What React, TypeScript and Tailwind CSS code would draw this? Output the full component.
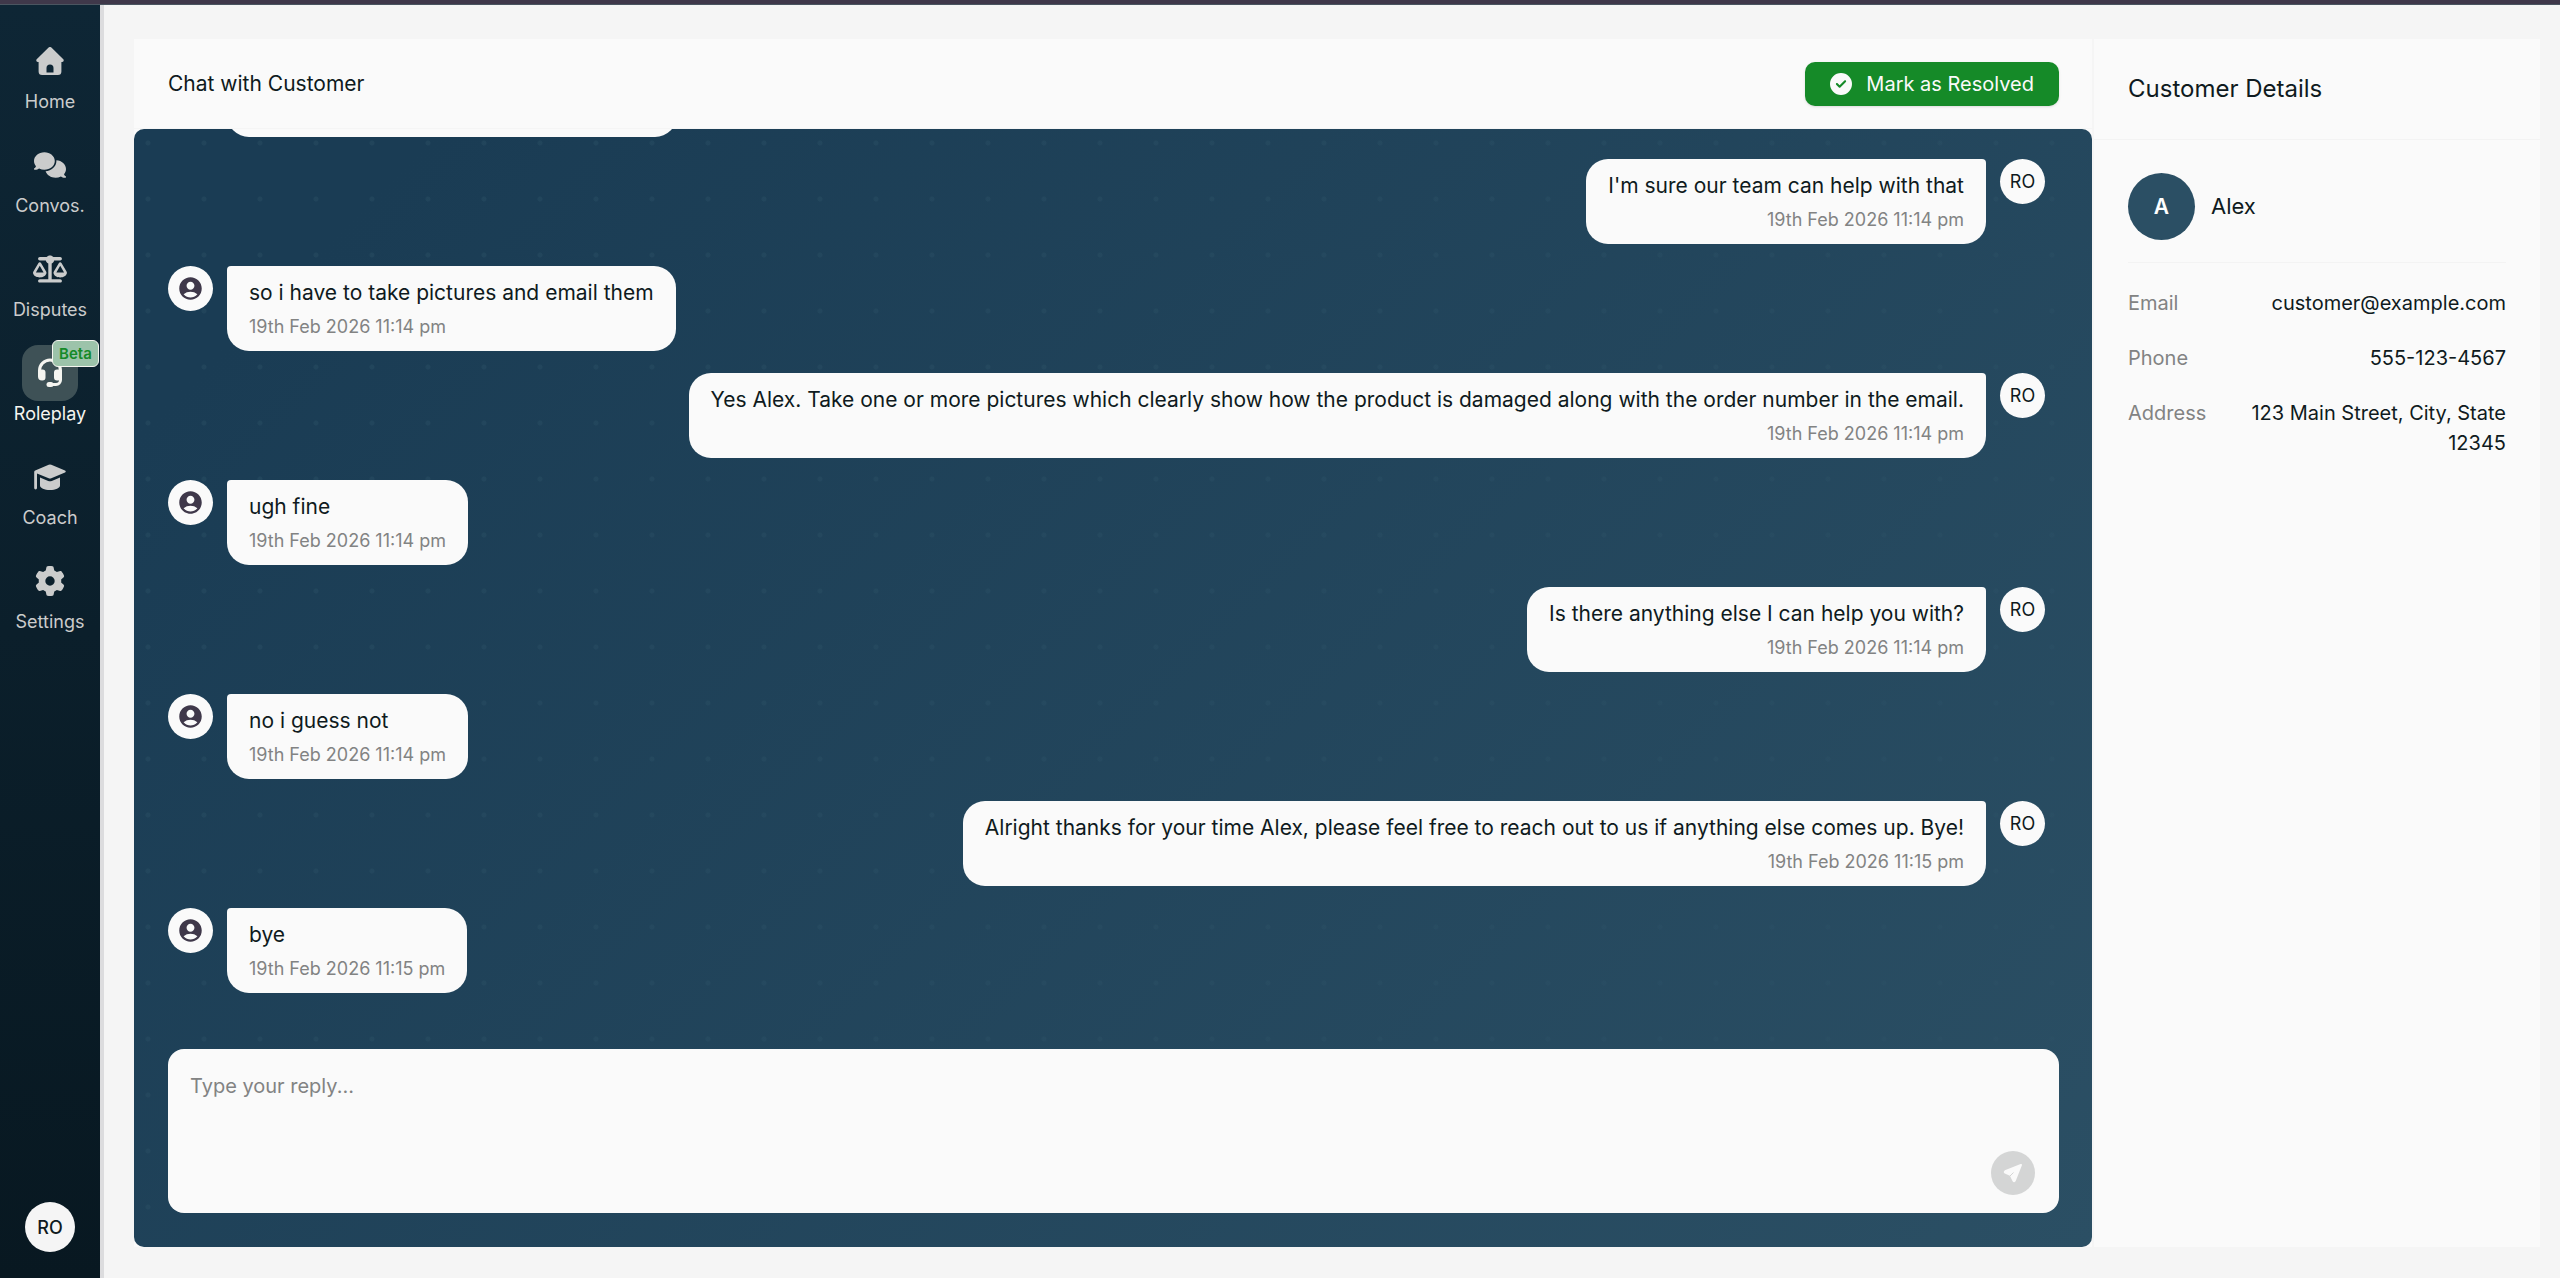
import type { ReactNode } from "react";
import { FaComments, FaGear, FaScaleBalanced, FaCircleCheck } from "react-icons/fa6";
import { MdAccountCircle } from "react-icons/md";

interface NavEntry {
  label: string;
  icon: ReactNode;
  active?: boolean;
  badge?: string;
}

interface Message {
  id: number;
  from: "customer" | "agent";
  text: string;
  time: string;
}

function HomeIcon() {
  return (
    <svg width="28" height="28" viewBox="0 0 28 28" fill="currentColor" aria-hidden="true">
      <path
        fillRule="evenodd"
        d="M12.6.6a2 2 0 0 1 2.8 0l11.9 11.6c.9.9.4 2.8-1.1 2.8h-.8v9.500a3.500 3.500 0 0 1-3.500 3.500H6.100a3.500 3.500 0 0 1-3.500-3.500V15H1.800C.3 15-.2 13.100.7 12.200zM10.500 25.500h7v-4.500a3.500 3.500 0 0 0-7 0z"
      />
    </svg>
  );
}

function HeadsetIcon() {
  return (
    <svg width="28" height="30" viewBox="0 0 28 30" aria-hidden="true">
      <path d="M3.500 14v-1.500a10.500 10.500 0 0 1 21 0V22a4.500 4.500 0 0 1-4.500 4.500h-4" fill="none" stroke="currentColor" strokeWidth="3" strokeLinecap="round" />
      <path d="M2 14.500a3 3 0 0 1 3-3h1.500a3 3 0 0 1 3 3v5a3 3 0 0 1-3 3H6a4 4 0 0 1-4-4zM18 14.500a3 3 0 0 1 3-3h2a3 3 0 0 1 3 3v4a4 4 0 0 1-4 4h-1a3 3 0 0 1-3-3z" fill="currentColor" />
      <rect x="10.500" y="24" width="7" height="5" rx="2.500" fill="currentColor" />
    </svg>
  );
}

function CapIcon() {
  return (
    <svg width="32" height="26" viewBox="0 0 32 26" fill="currentColor" aria-hidden="true">
      <path d="M14.700.7a3.500 3.500 0 0 1 2.600 0L31 6.500c1 .4 1 1.600 0 2l-13.700 5.700a3.500 3.500 0 0 1-2.600 0L3 9.400V24a1.400 1.400 0 0 1-2.800 0V8c0-.8.4-1.300 1-1.600z" />
      <path d="M6 13.500l8.200 3.400a5 5 0 0 0 3.600 0l8.200-3.400v8c0 2.500-4.500 4.500-10 4.500S6 24 6 21.500z" />
    </svg>
  );
}

function SendIcon() {
  return (
    <svg width="20" height="20" viewBox="0 0 20 20" aria-hidden="true">
      <path d="M18 2 2.200 8.300c-.6.3-.6 1 0 1.200l5.600 2.700L10.500 17.800c.3.6 1 .6 1.200 0z" fill="currentColor" stroke="currentColor" strokeWidth="2" strokeLinejoin="round" />
      <path d="M6.500 13.500 10.500 9.500" stroke="#d4d5d5" strokeWidth="1" />
    </svg>
  );
}

const navEntries: NavEntry[] = [
  { label: "Home", icon: <HomeIcon /> },
  { label: "Convos.", icon: <FaComments size={32} /> },
  { label: "Disputes", icon: <FaScaleBalanced size={34} /> },
  { label: "Roleplay", icon: <HeadsetIcon />, active: true, badge: "Beta" },
  { label: "Coach", icon: <CapIcon /> },
  { label: "Settings", icon: <FaGear size={30} /> },
];

const messages: Message[] = [
  { id: 2, from: "agent", text: "I'm sure our team can help with that", time: "19th Feb 2026 11:14 pm" },
  { id: 3, from: "customer", text: "so i have to take pictures and email them", time: "19th Feb 2026 11:14 pm" },
  {
    id: 4,
    from: "agent",
    text: "Yes Alex. Take one or more pictures which clearly show how the product is damaged along with the order number in the email.",
    time: "19th Feb 2026 11:14 pm",
  },
  { id: 5, from: "customer", text: "ugh fine", time: "19th Feb 2026 11:14 pm" },
  { id: 6, from: "agent", text: "Is there anything else I can help you with?", time: "19th Feb 2026 11:14 pm" },
  { id: 7, from: "customer", text: "no i guess not", time: "19th Feb 2026 11:14 pm" },
  {
    id: 8,
    from: "agent",
    text: "Alright thanks for your time Alex, please feel free to reach out to us if anything else comes up. Bye!",
    time: "19th Feb 2026 11:15 pm",
  },
  { id: 9, from: "customer", text: "bye", time: "19th Feb 2026 11:15 pm" },
];

const details = [
  { label: "Email", value: "customer@example.com" },
  { label: "Phone", value: "555-123-4567" },
  { label: "Address", value: "123 Main Street, City, State 12345" },
];

function NavItem({ label, icon, active, badge }: NavEntry) {
  return (
    <a href="#" className={`flex flex-col items-center ${active ? "text-[#f5f5f0]" : "text-[#cbcccc]"}`}>
      <span className={`relative flex size-14 items-center justify-center rounded-2xl ${active ? "bg-[#3e5156]" : ""}`}>
        {icon}
        {badge && (
          <span className="absolute -top-[5px] left-[30px] rounded-md border border-[#f5f5f0] bg-[#9cc3aa] px-1.5 text-[15px] leading-[25px] font-semibold text-[#158a28]">
            {badge}
          </span>
        )}
      </span>
      <span className="text-[18px] leading-[26px]">{label}</span>
    </a>
  );
}

function MessageRow({ from, text, time }: Message) {
  const agent = from === "agent";
  return (
    <li className={`flex shrink-0 items-start gap-3.5 ${agent ? "flex-row-reverse pr-3.5" : ""}`}>
      <span className="flex size-[45px] shrink-0 items-center justify-center rounded-full bg-[#fafafa] text-[18px] text-[#0f1a20]">
        {agent ? "RO" : <MdAccountCircle size={27} className="text-[#3f384a]" />}
      </span>
      <div className={`rounded-[22px] bg-[#fafafa] px-[22px] pt-[10px] pb-2 ${agent ? "rounded-tr-sm text-right" : "rounded-tl-sm"}`}>
        <p className="text-[21px] leading-[34px] text-[#0f1a20]">{text}</p>
        <p className="text-[18px] leading-[33px] text-[#828383]">{time}</p>
      </div>
    </li>
  );
}

export default function App() {
  return (
    <div className="flex h-screen flex-col bg-[#f5f5f5] font-['Inter',sans-serif] text-[#0f1a20]">
      <div className="h-[5px] shrink-0 border-b border-[#4a5560] bg-[#3f384a]" />
      <div className="flex min-h-0 flex-1">
        <nav className="flex w-[104px] shrink-0 flex-col border-r-4 border-[#dcdcde] bg-linear-to-b from-[#0e2635] to-[#081821] pt-7 pb-[26px]">
          <div className="flex flex-col gap-[22px]">
            {navEntries.map((entry) => (
              <NavItem key={entry.label} {...entry} />
            ))}
          </div>
          <button className="mx-auto mt-auto size-[50px] rounded-full bg-[#f5f5f5] text-[18px] font-medium">RO</button>
        </nav>

        <main className="flex min-w-0 flex-1 pt-[34px] pr-5 pb-[31px] pl-[30px]">
          <section className="flex min-w-0 flex-1 flex-col bg-[#fafafa]">
            <header className="flex h-[90px] shrink-0 items-center justify-between border-b border-[#f5f5f5] pr-[33px] pl-[34px]">
              <h1 className="text-[21px]">Chat with Customer</h1>
              <button className="flex h-11 items-center gap-3.5 rounded-[10px] bg-[#158a28] px-[25px] text-[20px] text-[#fafafa] shadow-sm">
                <FaCircleCheck size={22} />
                Mark as Resolved
              </button>
            </header>

            <div className="flex min-h-0 flex-1 flex-col gap-14 overflow-hidden rounded-[10px] bg-[radial-gradient(circle_at_14px_14px,#2c516666_2px,transparent_3px),linear-gradient(135deg,#1a3c54_10%,#2b4f64)] bg-size-[56px_56px,100%_100%] pr-[33px] pb-[34px] pl-[34px]">
              <ul className="flex min-h-0 flex-1 flex-col justify-end gap-[22px] overflow-hidden">
                {/* tail of the message scrolled out above */}
                <li aria-hidden="true" className="ml-[59px] h-11 w-[450px] shrink-0 rounded-[22px] bg-[#fafafa]" />
                {messages.map((message) => (
                  <MessageRow key={message.id} {...message} />
                ))}
              </ul>
              <form className="relative">
                <textarea
                  aria-label="Reply"
                  placeholder="Type your reply..."
                  className="block h-[164px] w-full resize-none rounded-2xl bg-[#fafafa] px-[22px] py-5 text-[20px] leading-[34px] outline-none placeholder:text-[#828383]"
                />
                <button
                  type="button"
                  aria-label="Send"
                  className="absolute right-6 bottom-[18px] flex size-11 items-center justify-center rounded-full bg-[#d4d5d5] text-[#fafafa]"
                >
                  <SendIcon />
                </button>
              </form>
            </div>
          </section>

          <aside className="flex w-[448px] shrink-0 flex-col border-l-2 border-[#f5f5f5] bg-[#fafafa]">
            <header className="flex h-[101px] shrink-0 items-center border-b border-[#f3f3f3] px-[34px]">
              <h2 className="text-[24px]">Customer Details</h2>
            </header>
            <div className="px-[34px] pt-[33px]">
              <div className="flex items-center gap-4 border-b border-[#f3f3f3] pb-[22px]">
                <span className="flex size-[67px] items-center justify-center rounded-full bg-[#2b4f64] text-[21px] font-semibold text-white">A</span>
                <span className="text-[22px]">Alex</span>
              </div>
              <dl className="flex flex-col gap-[25px] pt-[25px] text-[20px] leading-[30px]">
                {details.map((item) => (
                  <div key={item.label} className="flex justify-between gap-10">
                    <dt className="text-[#828383]">{item.label}</dt>
                    <dd className="text-right">{item.value}</dd>
                  </div>
                ))}
              </dl>
            </div>
          </aside>
        </main>
      </div>
    </div>
  );
}
